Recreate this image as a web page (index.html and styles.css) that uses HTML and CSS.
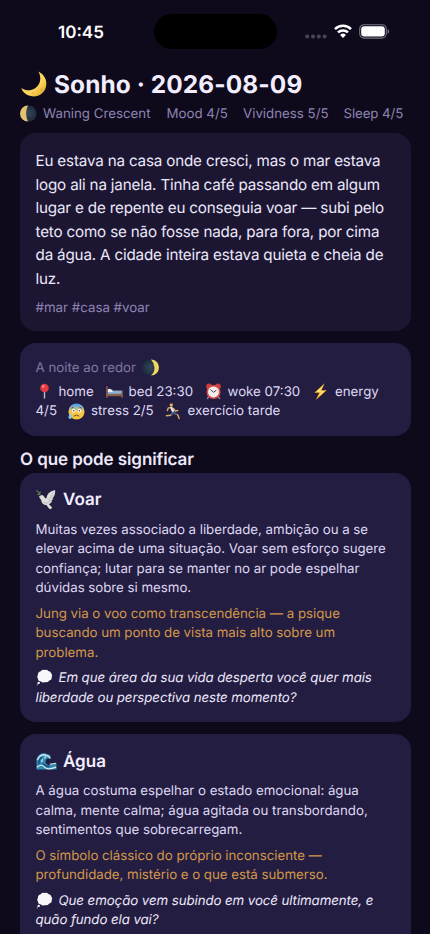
FILE: index.html
```html
<!DOCTYPE html>
<html lang="pt">
<head>
<meta charset="utf-8">
<title>Sonho</title>
<link rel="stylesheet" href="styles.css">
</head>
<body>
<svg class="defs" aria-hidden="true">
  <defs>
    <linearGradient id="gold" x1="0" y1="0" x2="1" y2="1"><stop offset="0" stop-color="#f3cf62"/><stop offset=".6" stop-color="#fbd75a"/><stop offset="1" stop-color="#d99b25"/></linearGradient>
    <radialGradient id="dark"><stop offset="0" stop-color="#33475a"/><stop offset="1" stop-color="#1d2c3c"/></radialGradient>
    <linearGradient id="face" x1="0" y1="0" x2="0" y2="1"><stop offset="0" stop-color="#3f95f0"/><stop offset=".2" stop-color="#7fb3cf"/><stop offset=".5" stop-color="#f3c74e"/><stop offset="1" stop-color="#f8c03a"/></linearGradient>
    <symbol id="cloud" viewBox="0 0 18 18"><path fill="#f7f7f9" d="M5 2.300Q6.800.2 9 1.100q2.600-1 4 1 2.800.1 3.200 2.600 1.700 1.600.5 3.900.2 3.200-2.600 3.700-1.700 2.400-4.400 1.400-2.600 1.400-4.400-.4-3 0-3.200-2.900Q.6 8.300 2 6.100 1.900 3 5 2.300z"/><circle cx="2.800" cy="14.700" r="1.300" fill="#f4f4f8"/><circle cx="1.300" cy="16.800" r=".6" fill="#ddd"/></symbol>
  </defs>
</svg>
<div class="screen">
  <header class="status">
    <span class="time">10:45</span>
    <span class="island"></span>
    <span class="indicators">
      <svg class="dots" viewBox="0 0 22 5"><g fill="#494654"><circle cx="2.200" cy="2.500" r="2"/><circle cx="8" cy="2.500" r="2"/><circle cx="13.800" cy="2.500" r="2"/><circle cx="19.600" cy="2.500" r="2"/></g></svg>
      <svg class="wifi" viewBox="0 0 18 14"><g fill="none" stroke="#fff" stroke-width="2.500"><path d="M1 5.100a11.500 11.500 0 0 1 16 0"/><path d="M4 8.400a7.200 7.200 0 0 1 10 0"/></g><path fill="#fff" d="M9 13.900 6.100 11a4.200 4.200 0 0 1 5.800 0z"/></svg>
      <svg class="battery" viewBox="0 0 31 15"><rect x=".7" y=".7" width="26.600" height="13.400" rx="4.300" fill="none" stroke="#777482" stroke-width="1.100"/><rect x="2.200" y="2.200" width="23.600" height="10.400" rx="3" fill="#fff"/><path fill="#777482" d="M28.700 5v4.800q1.500-.7 1.500-2.400T28.700 5z"/></svg>
    </span>
  </header>
  <main>
    <h1><svg class="moon" viewBox="0 0 26 26"><path fill="url(#gold)" d="M17.300.4C23 3 26.600 9.200 25 15.700 23.500 22.500 16.500 26.700 9.700 25 5 23.800 1.300 20.800.4 16.900c4 3 9.400 3.100 13.400.6C19.400 14 21 6.500 17.300.4z"/><circle cx="20.500" cy="18.500" r="1.200" fill="#d9a437" opacity=".6"/><circle cx="12" cy="22" r="1" fill="#d9a437" opacity=".6"/></svg><span>Sonho · 2026-08-09</span></h1>
    <div class="meta">
      <svg class="phase" viewBox="0 0 18 18"><circle cx="9" cy="9" r="8.500" fill="url(#dark)"/><path fill="#e3c173" d="M8.500.5a8.500 8.500 0 0 0 0 17Q6.500 14 6.500 9T8.500.5z"/></svg>
      <span class="m1">Waning Crescent</span><span class="m2">Mood 4/5</span><span class="m3">Vividness 5/5</span><span class="m4">Sleep 4/5</span>
    </div>

    <section class="card story">
      <p>Eu estava na casa onde cresci, mas o mar estava<br>logo ali na janela. Tinha café passando em algum<br>lugar e de repente eu conseguia voar — subi pelo<br>teto como se não fosse nada, para fora, por cima<br>da água. A cidade inteira estava quieta e cheia de<br>luz.</p>
      <div class="tags">#mar #casa #voar</div>
    </section>

    <section class="card night">
      <div class="label"><span>A noite ao redor</span><svg class="phase" viewBox="0 0 18 18"><circle cx="9" cy="9" r="8.500" fill="url(#dark)"/><path fill="#efd561" d="M9.500.5a8.500 8.500 0 0 1 0 17Q13.500 14 13.200 9T9.500.5z"/></svg></div>
      <div class="facts">
        <div class="row">
          <svg class="e" viewBox="0 0 18 18"><path d="M9 8v8.500" stroke="#b6bcc5" stroke-width="1.500"/><circle cx="9" cy="5.200" r="4.500" fill="#e33b42"/><circle cx="7.600" cy="3.700" r="1.300" fill="#ff9290"/></svg><span class="home">home</span>
          <svg class="e" viewBox="0 0 18 18"><path d="M1 3.500v12M17 8v7.500" stroke="#98674a" stroke-width="1.500"/><path fill="#87614b" d="M1 11h16v3H1z"/><path fill="#8dafd1" d="M2 8h14.500v3.500H2z"/><path fill="#e9edf4" d="M2 6.500q3-1 5 1.500v1.500H2z"/></svg><span class="bed">bed 23:30</span>
          <svg class="e" viewBox="0 0 18 18"><path d="m4 14-1.500 3M14 14l1.500 3" stroke="#99939f" stroke-width="1.500"/><circle cx="4.300" cy="3.600" r="3" fill="#c93e3f"/><circle cx="13.700" cy="3.600" r="3" fill="#c93e3f"/><circle cx="9" cy="9.500" r="7.500" fill="#d94a49"/><circle cx="9" cy="9.500" r="5.800" fill="#f2eee9"/><path d="M5.800 7 9 9.800 12 7.700" fill="none" stroke="#413b48" stroke-width="1"/></svg><span class="woke">woke 07:30</span>
          <svg class="e" viewBox="0 0 18 18"><path fill="#fdb72e" d="M13.500.2 2.500 10.300h5.200L4 18 15.600 7.800H10z"/><path fill="#ffe078" d="M12 2.300 4.500 9.400h5L7.300 14l6-5.400H8.500z"/></svg><span class="energy">energy</span>
        </div>
        <div class="row">
          <span class="four">4/5</span>
          <svg class="e" viewBox="0 0 18 18"><circle cx="9" cy="9" r="8.500" fill="url(#face)"/><g fill="#fff"><circle cx="6" cy="8.300" r="1.900"/><circle cx="12" cy="8.300" r="1.900"/></g><g fill="#473632"><circle cx="6" cy="8.300" r=".8"/><circle cx="12" cy="8.300" r=".8"/></g><path d="m3.500 5.500 2.500-1.300M14.500 5.500 12 4.200M6 14q3-2.500 6 0" fill="none" stroke="#754d2a" stroke-width="1"/><path fill="#72c9f4" d="M2.200 10.800q-3.400 5.400 0 6.200 3.400-.8 0-6.200z"/></svg><span class="stress">stress 2/5</span>
          <svg class="e run" viewBox="0 0 18 18"><g fill="none" stroke-linecap="round" stroke-linejoin="round"><path stroke="#d8aa65" stroke-width="1.500" d="M6.500 4.500 3.300 5.500 2.500 8M9 6l2 2.500 2.500-.5M8 10.500 6 13l-4.500.5M10 11l3.500 1.500 1.500 4"/><path stroke="#dedfe3" stroke-width="2.700" d="M7 5.300 8.500 8.800"/><path stroke="#3c5985" stroke-width="2" d="M9 10.200 7 11.800M9.500 10l2.500 1.600"/></g><circle cx="6.700" cy="1.900" r="1.800" fill="#e9b66e"/><path d="M5.200 1.200q1-2 3 0" stroke="#67452d" fill="none"/></svg><span class="exercise">exercício tarde</span>
        </div>
      </div>
    </section>

    <h2>O que pode significar</h2>

    <section class="card symbol voar">
      <h3><svg class="big" viewBox="0 0 22 22"><path fill="#dcdcda" d="M4.600 6.700Q7 5.500 8.700 8q.4 1.700 2 1.900Q11.500 3 20 1q.6 5.500-3 9l1.200.1-2.300 2.600 1 .1q-1.500 2.600-3.400 3.200l3.300 3-1 2.200-2.300-.8-2.300-3.400q-5.300-.8-5.800-5.600L3 8.200z"/><path fill="none" stroke="#a5a8ab" stroke-width=".7" d="M18.500 3.500q-3 6.500-6 8M16 12l-3 1.200M8 14q3 1.800 5.200.3"/><path stroke="#617f46" fill="none" d="M5 7 1.500 2"/><path fill="#6b894c" d="M.7 3 .4.8l2.300 1.700zm1.900 1.300 2.200-2L5 4.700zM1 6l2-1.500 1.500 2z"/></svg><span>Voar</span></h3>
      <p class="body">Muitas vezes associado a liberdade, ambição ou a se<br>elevar acima de uma situação. Voar sem esforço sugere<br>confiança; lutar para se manter no ar pode espelhar<br>dúvidas sobre si mesmo.</p>
      <p class="jung">Jung via o voo como transcendência — a psique<br>buscando um ponto de vista mais alto sobre um<br>problema.</p>
      <p class="ask"><svg class="e" viewBox="0 0 18 18"><use href="#cloud"/></svg><span>Em que área da sua vida desperta você quer mais</span><br>liberdade ou perspectiva neste momento?</p>
    </section>

    <section class="card symbol agua">
      <h3><svg class="big" viewBox="0 0 22 22"><path fill="#328bb2" d="M.5 19.500V9Q2.300 2.500 8.500 2.200l6 2.100 1.500 4-3-.7-2.600 1.200-.5 3q1.500 3.500 5.500 3l6.100-2v6.700z"/><path fill="none" stroke="#b7e1e8" stroke-width="1.800" d="M1.500 9.500q2.400-6 7.500-5.500l4.500 1.700 1 2"/><path fill="none" stroke="#d9edee" stroke-width="1.200" d="M1 17q5-4 8-.2t12 .1M7 8.500l-1.200 3M10 5.500 9 8M14.500 14l6.500-1.200"/><path fill="none" stroke="#1a5281" stroke-width="1.600" d="M3 14q-.7-5 3-7.500M7.500 13q1.700 3.300 6.500 3.200"/></svg><span>Água</span></h3>
      <p class="body">A água costuma espelhar o estado emocional: água<br>calma, mente calma; água agitada ou transbordando,<br>sentimentos que sobrecarregam.</p>
      <p class="jung">O símbolo clássico do próprio inconsciente —<br>profundidade, mistério e o que está submerso.</p>
      <p class="ask"><svg class="e" viewBox="0 0 18 18"><use href="#cloud"/></svg><span>Que emoção vem subindo em você ultimamente, e</span><br>quão fundo ela vai?</p>
    </section>
  </main>
</div>
</body>
</html>
```
FILE: styles.css
```css
* { box-sizing: border-box; margin: 0; padding: 0; }
body { background: #0e0a1c; color: #ece8fa; font-family: Inter, "Liberation Sans", sans-serif; white-space: nowrap; text-rendering: geometricPrecision; }
.defs { position: absolute; width: 0; height: 0; }
.screen { width: 430px; height: 934px; overflow: hidden; }
svg { flex: none; overflow: visible; }
.status { height: 66px; padding-top: 13.500px; display: grid; grid-template-columns: 154px 122.500px 153.500px; align-items: start; }
.time { color: #fff; font-size: 17px; line-height: 20px; font-weight: 600; margin: 9px 0 0 58px; }
.island { height: 35.500px; border-radius: 18px; background: #000; }
.indicators { display: flex; align-items: flex-start; padding: 10.500px 0 0 28.500px; }
.dots { width: 22px; height: 5px; margin-top: 10px; }
.wifi { width: 18px; height: 14px; margin-left: 7px; }
.battery { width: 31px; height: 15px; margin-left: 7px; }
main { padding: 0 19.500px 0 20px; }
h1 { display: flex; align-items: center; height: 36px; font-size: 24.400px; letter-spacing: .11px; font-weight: 700; color: #f2eefe; }
.moon { width: 26px; height: 26px; margin: 0 7.500px 0 .5px; }
.meta { height: 23px; display: flex; align-items: center; font-size: 13.300px; color: #8e84b2; }
.phase { width: 17px; height: 17px; }
.meta span { flex: none; width: 76.500px; padding-top: 1px; }
.meta .m1 { width: 123.500px; margin-left: 6px; }
.meta .m3 { width: 100.500px; }
.meta .m4 { width: 60px; letter-spacing: -.1px; }
.card { border-radius: 16px; background: #241d42; padding: 0 15.500px; margin-bottom: 12px; }
.story { background: #1c1632; height: 198px; margin-top: 8.300px; padding-top: 16px; }
.story p { font-size: 15.200px; line-height: 23.500px; letter-spacing: -.17px; }
.tags { font-size: 13.300px; line-height: 20px; margin-top: 8px; color: #8e84b2; }
.night { height: 92.700px; padding-top: 14px; }
.label { display: flex; align-items: center; height: 20px; font-size: 13.300px; color: #8177a1; }
.label span { padding-top: 2px; }
.label .phase { margin-left: 6px; }
.facts { font-size: 13.300px; line-height: 19.500px; margin-top: 4.500px; color: #dfd9f4; }
.row { display: flex; align-items: center; height: 19.500px; }
.e { width: 17px; height: 17px; vertical-align: -4px; margin-right: 6px; }
.row span { flex: none; padding-top: 2px; }
.home { width: 47px; }
.bed { width: 76px; }
.woke { width: 84.500px; }
.four { width: 32.500px; }
.stress { width: 73.500px; }
h2 { height: 25px; line-height: 24px; font-size: 17px; letter-spacing: -.08px; font-weight: 600; }
.symbol { padding-top: 14.500px; height: 249.500px; }
h3 { display: flex; align-items: center; height: 25px; font-size: 17px; font-weight: 600; color: #f2eefe; }
h3 span { padding-top: 1px; }
.big { width: 21px; height: 21px; margin-right: 6.500px; }
.symbol p { font-size: 13.300px; line-height: 19.500px; letter-spacing: -.03px; }
.symbol .body { margin-top: 8.500px; color: #ddd7f0; }
.symbol .jung { margin-top: 6px; color: #d29748; }
.symbol .ask { margin-top: 6px; font-style: italic; letter-spacing: -.09px; }
```
